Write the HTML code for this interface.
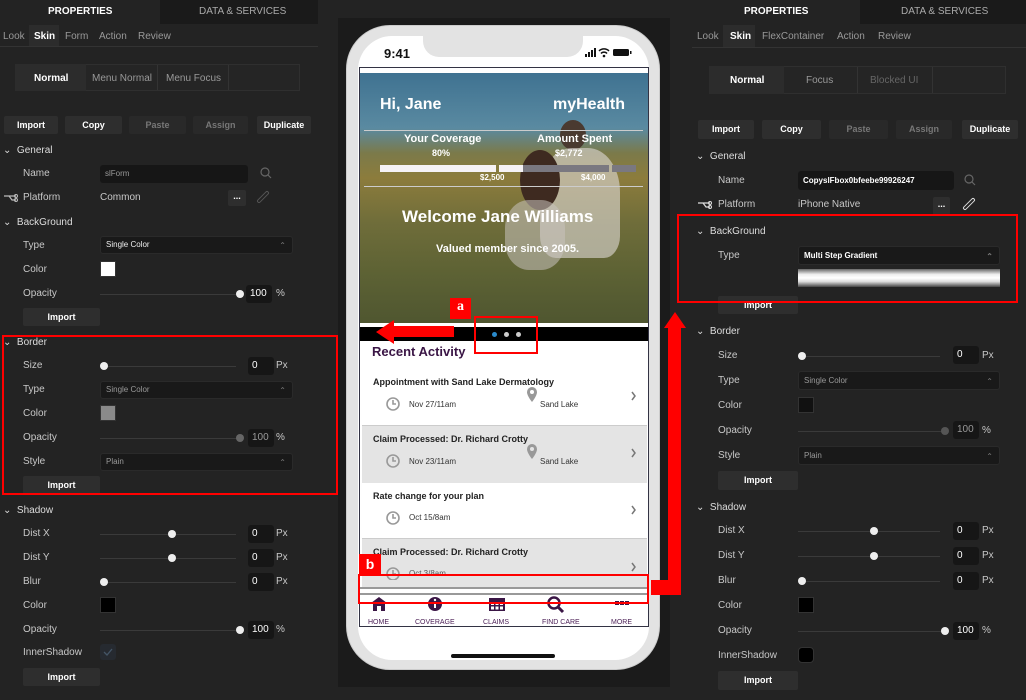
<!DOCTYPE html>
<html><head><meta charset="utf-8"><style>
*{margin:0;padding:0;box-sizing:border-box}
body{width:1026px;height:700px;background:#232323;font-family:"Liberation Sans",sans-serif;color:#ccc;position:relative;overflow:hidden;font-size:10px}
.a{position:absolute}
.t{position:absolute;white-space:nowrap}
.lbl{color:#c8c8c8;font-size:10px}
.sec{color:#ddd;font-size:10px}
.btn{position:absolute;background:#2e2e2e;border-radius:2px;color:#fff;font-weight:bold;font-size:9px;text-align:center}
.btn.d{color:#777;background:#292929}
.inp{position:absolute;background:#161616;border-radius:3px;color:#ddd;font-size:8px;padding-left:5px}
.sel{position:absolute;background:#191919;border:1px solid #2a2a2a;border-radius:3px;color:#eee;font-size:8px;padding-left:5px}
.sel:after{content:"⌃";position:absolute;right:6px;top:1px;color:#777;font-size:8px}
.trk{position:absolute;height:1px;background:#3a3a3a}
.knob{position:absolute;width:8px;height:8px;border-radius:50%;background:#eee}
.num{position:absolute;background:#161616;border-radius:3px;color:#fff;font-size:10px;padding:3px 0 0 4px;height:18px;width:26px}
.sw{position:absolute;width:16px;height:16px;border:1px solid #333}
.rb{position:absolute;border:2px solid #f00}
.dim{color:#888}
svg{position:absolute}
</style></head><body>

<!-- LEFT PANEL -->
<div class="a" style="left:0;top:0;width:160px;height:24px;background:#232323"></div>
<div class="a" style="left:160px;top:0;width:158px;height:24px;background:#1a1a1a"></div>
<div class="t" style="left:48px;top:6px;font-size:10px;font-weight:bold;color:#fff">PROPERTIES</div>
<div class="t" style="left:199px;top:6px;font-size:10px;color:#aaa">DATA &amp; SERVICES</div>
<div class="a" style="left:0;top:46px;width:318px;height:1px;background:#333"></div>
<div class="a" style="left:29px;top:25px;width:30px;height:21px;background:#2c2c2c"></div>
<div class="t dim" style="left:3px;top:31px;color:#999">Look</div>
<div class="t" style="left:34px;top:31px;color:#fff;font-weight:bold">Skin</div>
<div class="t dim" style="left:65px;top:31px;color:#999">Form</div>
<div class="t dim" style="left:99px;top:31px;color:#999">Action</div>
<div class="t dim" style="left:138px;top:31px;color:#999">Review</div>
<div class="a" style="left:15px;top:64px;width:285px;height:27px;background:#252525;border:1px solid #2f2f2f"></div>
<div class="a" style="left:15px;top:64px;width:71px;height:27px;background:#2c2c2c"></div>
<div class="a" style="left:157px;top:65px;width:1px;height:25px;background:#333"></div>
<div class="a" style="left:228px;top:65px;width:1px;height:25px;background:#333"></div>
<div class="t" style="left:34px;top:73px;color:#fff;font-weight:bold">Normal</div>
<div class="t" style="left:92px;top:73px;color:#999">Menu Normal</div>
<div class="t" style="left:166px;top:73px;color:#999">Menu Focus</div>
<div class="btn" style="left:4px;top:116px;width:54px;height:18px;line-height:18px">Import</div>
<div class="btn" style="left:65px;top:116px;width:57px;height:18px;line-height:18px">Copy</div>
<div class="btn d" style="left:129px;top:116px;width:57px;height:18px;line-height:18px">Paste</div>
<div class="btn d" style="left:193px;top:116px;width:55px;height:18px;line-height:18px">Assign</div>
<div class="btn" style="left:257px;top:116px;width:54px;height:18px;line-height:18px">Duplicate</div>
<div class="t sec" style="left:3px;top:145px">⌄&nbsp; General</div>
<div class="t lbl" style="left:23px;top:168px">Name</div>
<div class="inp" style="left:100px;top:165px;width:148px;height:18px;line-height:18px;color:#999">slForm</div>
<svg style="left:260px;top:167px" width="12" height="12"><circle cx="5" cy="5" r="4" fill="none" stroke="#666" stroke-width="1.2"/><path d="M8 8l3 3" stroke="#666" stroke-width="1.2"/></svg>
<svg style="left:3px;top:193px" width="16" height="10"><path d="M1 3h5l3 4h4M6 3h7" stroke="#bbb" fill="none" stroke-width="1.2"/><circle cx="13" cy="3" r="1.5" fill="none" stroke="#bbb"/><circle cx="13" cy="7" r="1.5" fill="none" stroke="#bbb"/></svg>
<div class="t lbl" style="left:23px;top:192px">Platform</div>
<div class="t lbl" style="left:100px;top:192px">Common</div>
<div class="btn" style="left:228px;top:190px;width:18px;height:16px;line-height:12px">...</div>
<svg style="left:256px;top:190px" width="14" height="14"><path d="M3 11l8-8" stroke="#555" stroke-width="4" stroke-linecap="round"/><path d="M3 11l8-8" stroke="#232323" stroke-width="2" stroke-linecap="round"/></svg>
<div class="t sec" style="left:3px;top:217px">⌄&nbsp; BackGround</div>
<div class="t lbl" style="left:23px;top:240px">Type</div>
<div class="sel" style="left:100px;top:236px;width:193px;height:18px;line-height:16px">Single Color</div>
<div class="t lbl" style="left:23px;top:264px">Color</div>
<div class="sw" style="left:100px;top:261px;background:#fff"></div>
<div class="t lbl" style="left:23px;top:288px">Opacity</div>
<div class="trk" style="left:100px;top:294px;width:140px"></div><div class="knob" style="left:236px;top:290px"></div>
<div class="num" style="left:246px;top:285px">100</div><div class="t lbl" style="left:276px;top:288px">%</div>
<div class="btn" style="left:23px;top:308px;width:77px;height:18px;line-height:18px">Import</div>

<div class="t sec" style="left:3px;top:337px">⌄&nbsp; Border</div>
<div class="t lbl" style="left:23px;top:360px">Size</div>
<div class="trk" style="left:100px;top:366px;width:136px"></div><div class="knob" style="left:100px;top:362px"></div>
<div class="num" style="left:248px;top:357px">0</div><div class="t lbl" style="left:276px;top:360px">Px</div>
<div class="t lbl" style="left:23px;top:384px">Type</div>
<div class="sel" style="left:100px;top:381px;width:193px;height:18px;line-height:16px;color:#999">Single Color</div>
<div class="t lbl" style="left:23px;top:408px">Color</div>
<div class="sw" style="left:100px;top:405px;background:#8a8a8a"></div>
<div class="t lbl" style="left:23px;top:432px">Opacity</div>
<div class="trk" style="left:100px;top:438px;width:140px"></div><div class="knob" style="left:236px;top:434px;background:#666"></div>
<div class="num" style="left:248px;top:429px;color:#999">100</div><div class="t lbl" style="left:276px;top:432px">%</div>
<div class="t lbl" style="left:23px;top:456px">Style</div>
<div class="sel" style="left:100px;top:453px;width:193px;height:18px;line-height:16px;color:#999">Plain</div>
<div class="btn" style="left:23px;top:476px;width:77px;height:18px;line-height:18px">Import</div>
<div class="rb" style="left:2px;top:335px;width:336px;height:160px"></div>

<div class="t sec" style="left:3px;top:505px">⌄&nbsp; Shadow</div>
<div class="t lbl" style="left:23px;top:528px">Dist X</div>
<div class="trk" style="left:100px;top:534px;width:136px"></div><div class="knob" style="left:168px;top:530px"></div>
<div class="num" style="left:248px;top:525px">0</div><div class="t lbl" style="left:276px;top:528px">Px</div>
<div class="t lbl" style="left:23px;top:552px">Dist Y</div>
<div class="trk" style="left:100px;top:558px;width:136px"></div><div class="knob" style="left:168px;top:554px"></div>
<div class="num" style="left:248px;top:549px">0</div><div class="t lbl" style="left:276px;top:552px">Px</div>
<div class="t lbl" style="left:23px;top:576px">Blur</div>
<div class="trk" style="left:100px;top:582px;width:136px"></div><div class="knob" style="left:100px;top:578px"></div>
<div class="num" style="left:248px;top:573px">0</div><div class="t lbl" style="left:276px;top:576px">Px</div>
<div class="t lbl" style="left:23px;top:600px">Color</div>
<div class="sw" style="left:100px;top:597px;background:#000"></div>
<div class="t lbl" style="left:23px;top:624px">Opacity</div>
<div class="trk" style="left:100px;top:630px;width:140px"></div><div class="knob" style="left:236px;top:626px"></div>
<div class="num" style="left:248px;top:621px">100</div><div class="t lbl" style="left:276px;top:624px">%</div>
<div class="t lbl" style="left:23px;top:647px">InnerShadow</div>
<div class="a" style="left:100px;top:644px;width:16px;height:16px;border-radius:3px;background:#262a30"></div>
<svg style="left:102px;top:647px" width="12" height="10"><path d="M2 5l3 3 5-6" stroke="#456" fill="none" stroke-width="1.3"/></svg>
<div class="btn" style="left:23px;top:668px;width:77px;height:18px;line-height:18px">Import</div>

<!-- MIDDLE -->
<div class="a" style="left:338px;top:18px;width:332px;height:669px;background:#1b1b1b"></div>
<div class="a" style="left:346px;top:25px;width:314px;height:645px;background:#e3e3e3;border-radius:44px;border:1px solid #ccc"></div>
<div class="a" style="left:358px;top:36px;width:291px;height:624px;background:#fff;border-radius:34px"></div>
<div class="a" style="left:423px;top:35px;width:160px;height:22px;background:#e3e3e3;border-radius:0 0 16px 16px"></div>
<div class="t" style="left:384px;top:46px;font-size:13px;font-weight:bold;color:#111">9:41</div>
<svg style="left:584px;top:47px" width="50" height="12"><rect x="1" y="7" width="2" height="3" fill="#111"/><rect x="4" y="5" width="2" height="5" fill="#111"/><rect x="7" y="3" width="2" height="7" fill="#111"/><rect x="10" y="1" width="2" height="9" fill="#111"/><path d="M15 4a7 7 0 0 1 10 0M17 6.5a4 4 0 0 1 6 0" stroke="#111" fill="none" stroke-width="1.5"/><circle cx="20" cy="9" r="1.3" fill="#111"/><rect x="29" y="2" width="16" height="7" rx="1.5" fill="#111"/><rect x="46" y="4" width="1.5" height="3" fill="#111"/></svg>
<div class="a" style="left:359px;top:67px;width:290px;height:560px;border:1px solid #334"></div>
<div class="a" style="left:360px;top:73px;width:288px;height:250px;background:linear-gradient(180deg,#3f7291 0%,#5a8aa1 22%,#7b7a4a 32%,#8c7c3c 42%,#6f6d3a 60%,#5d6234 80%,#4f5630 100%)"></div>
<div class="a" style="left:560px;top:120px;width:26px;height:30px;border-radius:50%;background:#4a3a30"></div>
<div class="a" style="left:540px;top:148px;width:80px;height:110px;border-radius:40% 40% 20% 20%;background:rgba(215,210,205,.65)"></div>
<div class="a" style="left:520px;top:150px;width:40px;height:60px;border-radius:50%;background:#3e2a20"></div>
<div class="a" style="left:505px;top:200px;width:60px;height:70px;border-radius:40%;background:rgba(200,195,190,.55)"></div>
<div class="t" style="left:380px;top:96px;font-size:16px;font-weight:bold;color:#fff">Hi, Jane</div>
<div class="t" style="left:553px;top:96px;font-size:16px;font-weight:bold;color:#fff">myHealth</div>
<div class="a" style="left:364px;top:130px;width:279px;height:1px;background:#ccc"></div>
<div class="t" style="left:404px;top:133px;font-size:11px;font-weight:bold;color:#fff">Your Coverage</div>
<div class="t" style="left:432px;top:148px;font-size:9px;font-weight:bold;color:#fff">80%</div>
<div class="t" style="left:537px;top:133px;font-size:11px;font-weight:bold;color:#fff">Amount Spent</div>
<div class="t" style="left:555px;top:148px;font-size:9px;font-weight:bold;color:#fff">$2,772</div>
<div class="a" style="left:380px;top:165px;width:116px;height:7px;background:#f5f2f5"></div>
<div class="a" style="left:499px;top:165px;width:24px;height:7px;background:#f5f2f5"></div>
<div class="a" style="left:523px;top:165px;width:86px;height:7px;background:#7a7880"></div>
<div class="a" style="left:612px;top:165px;width:24px;height:7px;background:#7a7880"></div>
<div class="t" style="left:480px;top:173px;font-size:8px;font-weight:bold;color:#fff">$2,500</div>
<div class="t" style="left:581px;top:173px;font-size:8px;font-weight:bold;color:#fff">$4,000</div>
<div class="a" style="left:364px;top:186px;width:279px;height:1px;background:#ccc"></div>
<div class="t" style="left:402px;top:207px;font-size:17px;font-weight:bold;color:#fff">Welcome Jane Williams</div>
<div class="t" style="left:436px;top:243px;font-size:11px;font-weight:bold;color:#fff">Valued member since 2005.</div>
<div class="a" style="left:360px;top:327px;width:288px;height:14px;background:#000"></div>
<div class="a" style="left:492px;top:332px;width:5px;height:5px;border-radius:50%;background:#2a8acb"></div>
<div class="a" style="left:504px;top:332px;width:5px;height:5px;border-radius:50%;background:#ccc"></div>
<div class="a" style="left:516px;top:332px;width:5px;height:5px;border-radius:50%;background:#ccc"></div>
<div class="t" style="left:372px;top:344px;font-size:13px;font-weight:bold;color:#3a1545">Recent Activity</div>
<!-- items -->
<div class="a" style="left:362px;top:425px;width:285px;height:58px;background:#e4e4e4;border-top:1px solid #ccc"></div>
<div class="a" style="left:362px;top:538px;width:285px;height:50px;background:#e4e4e4;border-top:1px solid #ccc"></div>
<div class="t" style="left:373px;top:377px;font-size:9px;font-weight:bold;color:#222">Appointment with Sand Lake Dermatology</div>
<div class="t" style="left:409px;top:400px;font-size:8px;color:#333">Nov 27/11am</div>
<div class="t" style="left:540px;top:400px;font-size:8px;color:#333">Sand Lake</div>
<div class="t" style="left:373px;top:434px;font-size:9px;font-weight:bold;color:#222">Claim Processed: Dr. Richard Crotty</div>
<div class="t" style="left:409px;top:457px;font-size:8px;color:#333">Nov 23/11am</div>
<div class="t" style="left:540px;top:457px;font-size:8px;color:#333">Sand Lake</div>
<div class="t" style="left:373px;top:491px;font-size:9px;font-weight:bold;color:#222">Rate change for your plan</div>
<div class="t" style="left:409px;top:513px;font-size:8px;color:#333">Oct 15/8am</div>
<div class="t" style="left:373px;top:547px;font-size:9px;font-weight:bold;color:#222">Claim Processed: Dr. Richard Crotty</div>
<div class="t" style="left:409px;top:569px;font-size:8px;color:#555">Oct 3/8am</div>
<svg style="left:360px;top:380px" width="290" height="200">
<g fill="none" stroke="#999" stroke-width="1.6">
<circle cx="33" cy="24" r="6"/><path d="M33 20v4h3"/>
<circle cx="33" cy="81" r="6"/><path d="M33 77v4h3"/>
<circle cx="33" cy="138" r="6"/><path d="M33 134v4h3"/>
<circle cx="33" cy="194" r="6"/><path d="M33 190v4h3"/>
<path d="M272 12l3 4-3 4M272 69l3 4-3 4M272 126l3 4-3 4M272 183l3 4-3 4" stroke="#777" stroke-width="1.5"/>
</g>
<path d="M167 12a5 5 0 0 1 10 0c0 4-5 10-5 10s-5-6-5-10z" fill="#999"/><circle cx="172" cy="12" r="2" fill="#fff"/>
<path d="M167 69a5 5 0 0 1 10 0c0 4-5 10-5 10s-5-6-5-10z" fill="#999"/><circle cx="172" cy="69" r="2" fill="#e4e4e4"/>
</svg>
<div class="a" style="left:360px;top:587px;width:288px;height:2px;background:#999"></div>
<div class="a" style="left:360px;top:593px;width:288px;height:2px;background:#999"></div>
<div class="a" style="left:360px;top:595px;width:288px;height:31px;background:#fff"></div>
<svg style="left:360px;top:595px" width="288" height="20" fill="#3a1545">
<path d="M11 8l8-6 8 6v1h-2v7h-4v-5h-4v5h-4v-7h-2z"/>
<circle cx="75" cy="9" r="7"/><rect x="74" y="7" width="2" height="6" fill="#fff"/><circle cx="75" cy="5" r="1.2" fill="#fff"/>
<rect x="129" y="3" width="16" height="13"/><g fill="#fff"><rect x="131" y="7" width="3" height="3"/><rect x="135.5" y="7" width="3" height="3"/><rect x="140" y="7" width="3" height="3"/><rect x="131" y="11.5" width="3" height="3"/><rect x="135.5" y="11.5" width="3" height="3"/><rect x="140" y="11.5" width="3" height="3"/></g>
<circle cx="194" cy="8" r="5.5" fill="none" stroke="#3a1545" stroke-width="2.5"/><path d="M198 12l5 5" stroke="#3a1545" stroke-width="3"/>
<rect x="255" y="6" width="4" height="4"/><rect x="260" y="6" width="4" height="4"/><rect x="265" y="6" width="4" height="4"/>
</svg>
<div class="t" style="left:368px;top:619px;font-size:7px;color:#4a1e55">HOME</div>
<div class="t" style="left:415px;top:619px;font-size:7px;color:#4a1e55">COVERAGE</div>
<div class="t" style="left:483px;top:619px;font-size:7px;color:#4a1e55">CLAIMS</div>
<div class="t" style="left:542px;top:619px;font-size:7px;color:#4a1e55">FIND CARE</div>
<div class="t" style="left:611px;top:619px;font-size:7px;color:#4a1e55">MORE</div>
<div class="a" style="left:451px;top:654px;width:104px;height:4px;border-radius:2px;background:#111"></div>

<!-- annotations -->
<div class="a" style="left:392px;top:326px;width:62px;height:11px;background:#f00"></div>
<div class="a" style="left:376px;top:320px;width:0;height:0;border-top:12px solid transparent;border-bottom:12px solid transparent;border-right:18px solid #f00"></div>
<div class="a" style="left:450px;top:298px;width:21px;height:21px;background:#f00;color:#fff;font-family:'Liberation Serif',serif;font-weight:bold;font-size:14px;text-align:center;line-height:18px">a</div>
<div class="rb" style="left:474px;top:316px;width:64px;height:38px"></div>
<div class="a" style="left:359px;top:554px;width:22px;height:21px;background:#f00;color:#fff;font-weight:bold;font-size:14px;text-align:center;line-height:20px">b</div>
<div class="rb" style="left:358px;top:574px;width:291px;height:30px"></div>
<div class="a" style="left:651px;top:580px;width:30px;height:15px;background:#f00"></div>
<div class="a" style="left:668px;top:322px;width:13px;height:273px;background:#f00"></div>
<div class="a" style="left:664px;top:312px;width:0;height:0;border-left:11px solid transparent;border-right:11px solid transparent;border-bottom:16px solid #f00"></div>

<!-- RIGHT PANEL -->
<div class="a" style="left:692px;top:0;width:334px;height:700px;background:#232323"></div>
<div class="a" style="left:860px;top:0;width:166px;height:24px;background:#1a1a1a"></div>
<div class="t" style="left:744px;top:6px;font-size:10px;font-weight:bold;color:#fff">PROPERTIES</div>
<div class="t" style="left:901px;top:6px;font-size:10px;color:#aaa">DATA &amp; SERVICES</div>
<div class="a" style="left:692px;top:47px;width:334px;height:1px;background:#333"></div>
<div class="a" style="left:723px;top:25px;width:32px;height:22px;background:#2c2c2c"></div>
<div class="t" style="left:697px;top:31px;color:#999">Look</div>
<div class="t" style="left:730px;top:31px;color:#fff;font-weight:bold">Skin</div>
<div class="t" style="left:762px;top:31px;color:#999">FlexContainer</div>
<div class="t" style="left:837px;top:31px;color:#999">Action</div>
<div class="t" style="left:878px;top:31px;color:#999">Review</div>
<div class="a" style="left:709px;top:66px;width:297px;height:28px;background:#252525;border:1px solid #2f2f2f"></div>
<div class="a" style="left:709px;top:66px;width:75px;height:28px;background:#2c2c2c"></div>
<div class="a" style="left:857px;top:67px;width:1px;height:26px;background:#333"></div>
<div class="a" style="left:932px;top:67px;width:1px;height:26px;background:#333"></div>
<div class="t" style="left:730px;top:75px;color:#fff;font-weight:bold">Normal</div>
<div class="t" style="left:806px;top:75px;color:#999">Focus</div>
<div class="t" style="left:870px;top:75px;color:#666">Blocked UI</div>
<div class="btn" style="left:698px;top:120px;width:56px;height:19px;line-height:19px">Import</div>
<div class="btn" style="left:762px;top:120px;width:59px;height:19px;line-height:19px">Copy</div>
<div class="btn d" style="left:829px;top:120px;width:59px;height:19px;line-height:19px">Paste</div>
<div class="btn d" style="left:896px;top:120px;width:56px;height:19px;line-height:19px">Assign</div>
<div class="btn" style="left:962px;top:120px;width:56px;height:19px;line-height:19px">Duplicate</div>
<div class="t sec" style="left:696px;top:151px">⌄&nbsp; General</div>
<div class="t lbl" style="left:718px;top:175px">Name</div>
<div class="inp" style="left:798px;top:171px;width:156px;height:19px;line-height:19px;color:#fff;font-weight:bold">CopyslFbox0bfeebe99926247</div>
<svg style="left:964px;top:174px" width="12" height="12"><circle cx="5" cy="5" r="4" fill="none" stroke="#666" stroke-width="1.2"/><path d="M8 8l3 3" stroke="#666" stroke-width="1.2"/></svg>
<svg style="left:697px;top:200px" width="16" height="10"><path d="M1 3h5l3 4h4M6 3h7" stroke="#ddd" fill="none" stroke-width="1.2"/><circle cx="13" cy="3" r="1.5" fill="none" stroke="#ddd"/><circle cx="13" cy="7" r="1.5" fill="none" stroke="#ddd"/></svg>
<div class="t lbl" style="left:718px;top:199px">Platform</div>
<div class="t lbl" style="left:798px;top:199px">iPhone Native</div>
<div class="btn" style="left:933px;top:197px;width:17px;height:18px;line-height:14px">...</div>
<svg style="left:962px;top:197px" width="14" height="14"><path d="M3 11l8-8" stroke="#ddd" stroke-width="4" stroke-linecap="round"/><path d="M3 11l8-8" stroke="#232323" stroke-width="2" stroke-linecap="round"/></svg>
<div class="t sec" style="left:696px;top:226px">⌄&nbsp; BackGround</div>
<div class="t lbl" style="left:718px;top:250px">Type</div>
<div class="sel" style="left:798px;top:246px;width:202px;height:19px;line-height:17px;color:#fff;font-weight:bold">Multi Step Gradient</div>
<div class="a" style="left:798px;top:269px;width:202px;height:18px;background:linear-gradient(180deg,#666 0%,#eee 30%,#fff 50%,#ddd 70%,#444 100%)"></div>
<div class="btn" style="left:718px;top:296px;width:80px;height:18px;line-height:18px">Import</div>
<div class="rb" style="left:677px;top:214px;width:341px;height:89px"></div>

<div class="t sec" style="left:696px;top:326px">⌄&nbsp; Border</div>
<div class="t lbl" style="left:718px;top:350px">Size</div>
<div class="trk" style="left:798px;top:356px;width:142px"></div><div class="knob" style="left:798px;top:352px"></div>
<div class="num" style="left:953px;top:346px">0</div><div class="t lbl" style="left:982px;top:350px">Px</div>
<div class="t lbl" style="left:718px;top:375px">Type</div>
<div class="sel" style="left:798px;top:371px;width:202px;height:19px;line-height:17px;color:#999">Single Color</div>
<div class="t lbl" style="left:718px;top:400px">Color</div>
<div class="sw" style="left:798px;top:397px;background:#111"></div>
<div class="t lbl" style="left:718px;top:425px">Opacity</div>
<div class="trk" style="left:798px;top:431px;width:148px"></div><div class="knob" style="left:941px;top:427px;background:#555"></div>
<div class="num" style="left:953px;top:421px;color:#999">100</div><div class="t lbl" style="left:982px;top:425px">%</div>
<div class="t lbl" style="left:718px;top:450px">Style</div>
<div class="sel" style="left:798px;top:446px;width:202px;height:19px;line-height:17px;color:#999">Plain</div>
<div class="btn" style="left:718px;top:471px;width:80px;height:19px;line-height:19px">Import</div>
<div class="t sec" style="left:696px;top:502px">⌄&nbsp; Shadow</div>
<div class="t lbl" style="left:718px;top:525px">Dist X</div>
<div class="trk" style="left:798px;top:531px;width:142px"></div><div class="knob" style="left:870px;top:527px"></div>
<div class="num" style="left:953px;top:522px">0</div><div class="t lbl" style="left:982px;top:525px">Px</div>
<div class="t lbl" style="left:718px;top:550px">Dist Y</div>
<div class="trk" style="left:798px;top:556px;width:142px"></div><div class="knob" style="left:870px;top:552px"></div>
<div class="num" style="left:953px;top:547px">0</div><div class="t lbl" style="left:982px;top:550px">Px</div>
<div class="t lbl" style="left:718px;top:575px">Blur</div>
<div class="trk" style="left:798px;top:581px;width:142px"></div><div class="knob" style="left:798px;top:577px"></div>
<div class="num" style="left:953px;top:572px">0</div><div class="t lbl" style="left:982px;top:575px">Px</div>
<div class="t lbl" style="left:718px;top:600px">Color</div>
<div class="sw" style="left:798px;top:597px;background:#000"></div>
<div class="t lbl" style="left:718px;top:625px">Opacity</div>
<div class="trk" style="left:798px;top:631px;width:148px"></div><div class="knob" style="left:941px;top:627px"></div>
<div class="num" style="left:953px;top:622px">100</div><div class="t lbl" style="left:982px;top:625px">%</div>
<div class="t lbl" style="left:718px;top:650px">InnerShadow</div>
<div class="a" style="left:798px;top:647px;width:16px;height:16px;border-radius:4px;background:#000;border:1px solid #333"></div>
<div class="btn" style="left:718px;top:671px;width:80px;height:19px;line-height:19px">Import</div>
</body></html>
